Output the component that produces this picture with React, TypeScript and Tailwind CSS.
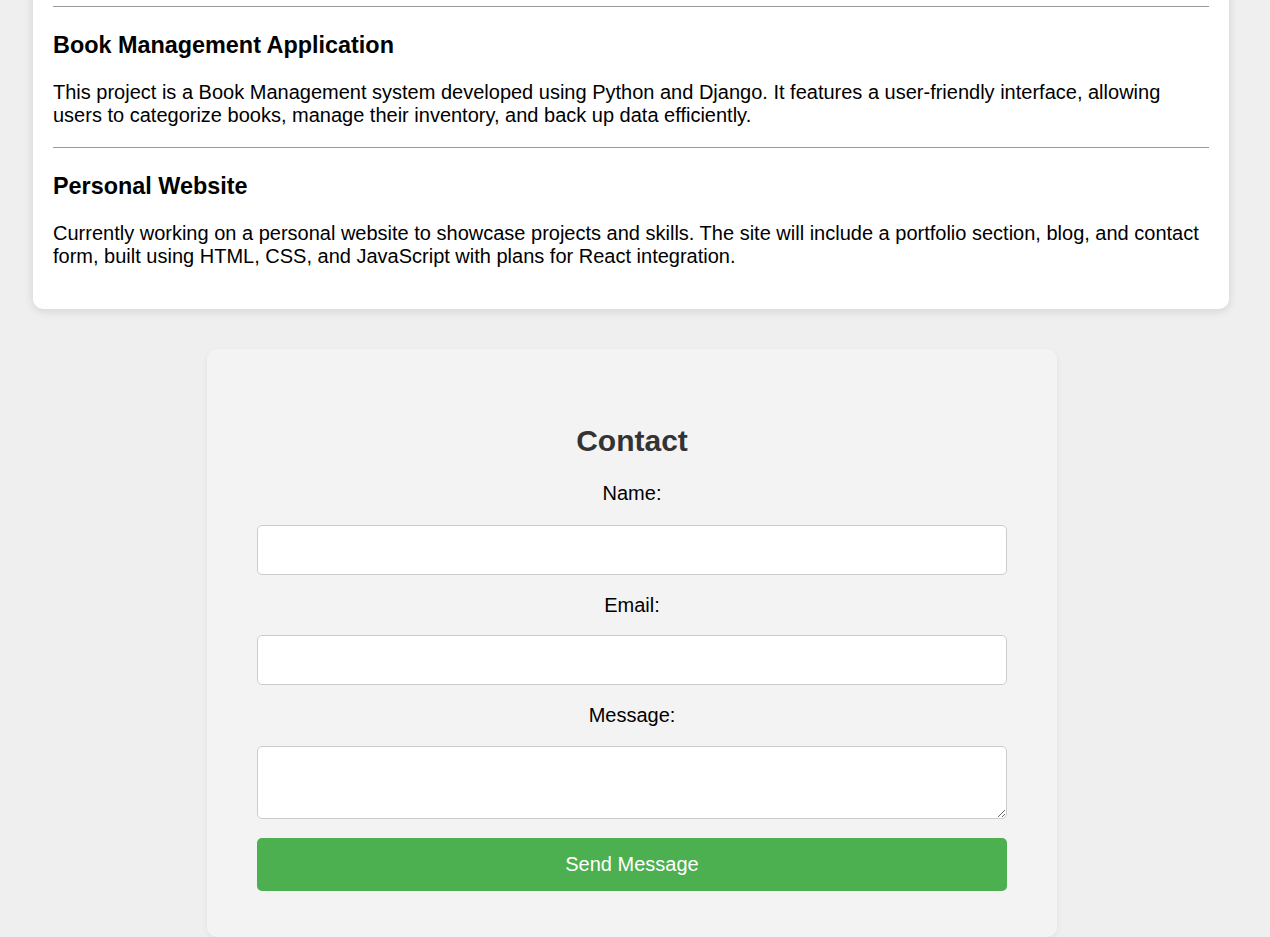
import React from "react";

export default function App() {
  return (
    <div className="min-h-[937px] bg-[#efefef] font-['Liberation_Sans',Arial,sans-serif] text-[20px] leading-[23px] text-black overflow-hidden">
      <div className="ml-[33px] w-[1196px] -mt-[20px] bg-white rounded-[10px] shadow-[0_2px_10px_rgba(0,0,0,0.12)] px-[20px] pt-[20px] pb-[21px]">
        <hr className="mt-[6px] border-0 border-t border-[#9a9a9a]" />
        <h3 className="mt-[25px] text-[23.4px] leading-[27px] font-bold">Book Management Application</h3>
        <p className="mt-[22px] mb-[20px]">
          This project is a Book Management system developed using Python and Django. It features a user-friendly interface, allowing users to categorize books, manage their inventory, and back up data efficiently.
        </p>
        <hr className="border-0 border-t border-[#9a9a9a]" />
        <h3 className="mt-[25px] text-[23.4px] leading-[27px] font-bold">Personal Website</h3>
        <p className="mt-[22px] mb-[20px]">
          Currently working on a personal website to showcase projects and skills. The site will include a portfolio section, blog, and contact form, built using HTML, CSS, and JavaScript with plans for React integration.
        </p>
      </div>

      <div className="ml-[207px] mt-[40px] w-[850px] bg-[#f3f3f3] rounded-[10px] shadow-[0_2px_6px_rgba(0,0,0,0.06)] px-[50px] pt-[75px] pb-[46px]">
        <h2 className="text-center text-[30px] leading-[34px] font-bold text-[#333]">Contact</h2>
        <form className="mt-[24px] flex flex-col" onSubmit={(e) => e.preventDefault()}>
          <label className="block text-center">Name:</label>
          <input type="text" className="mt-[20px] mb-[19px] h-[50px] w-full bg-white border border-[#ccc] rounded-[5px] px-[10px] outline-none" />
          <label className="block text-center">Email:</label>
          <input type="email" className="mt-[18px] mb-[19px] h-[50px] w-full bg-white border border-[#ccc] rounded-[5px] px-[10px] outline-none" />
          <label className="block text-center">Message:</label>
          <textarea className="mt-[19px] h-[73px] w-full bg-white border border-[#ccc] rounded-[5px] px-[10px] py-[10px] outline-none resize-y" />
          <button type="submit" className="mt-[19px] h-[53px] w-full bg-[#4caf50] text-white text-[20px] rounded-[5px]">Send Message</button>
        </form>
      </div>
    </div>
  );
}
